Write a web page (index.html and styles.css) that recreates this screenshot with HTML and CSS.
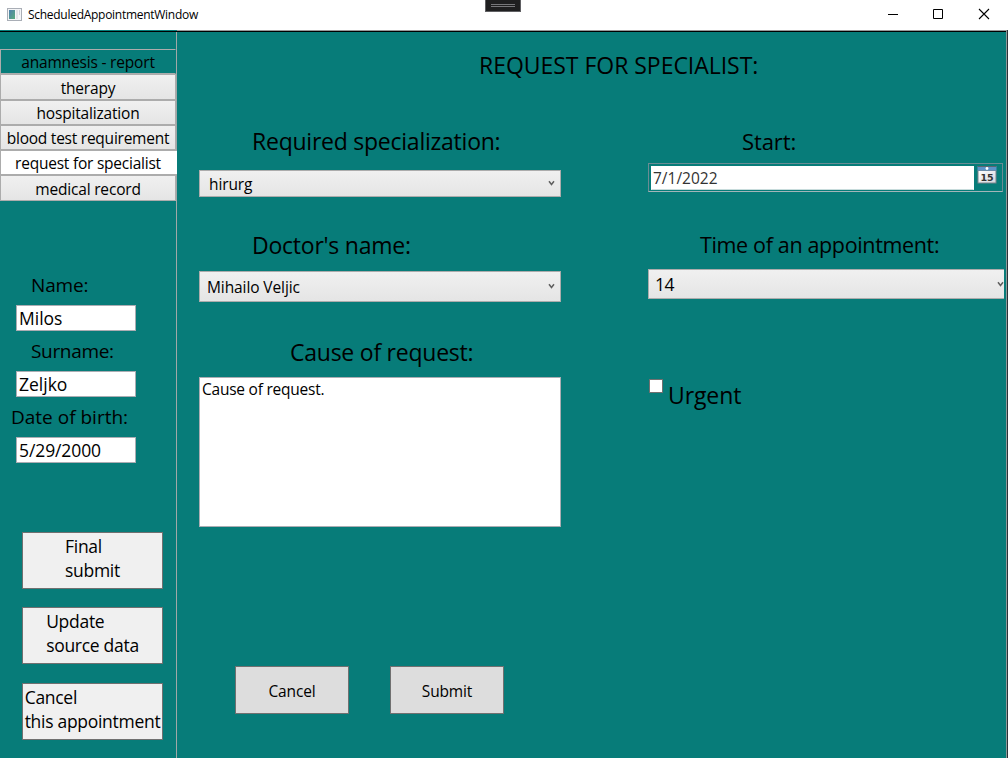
FILE: index.html
```html
<!DOCTYPE html>
<html lang="en">
<head>
<meta charset="utf-8">
<title>ScheduledAppointmentWindow</title>
<link rel="stylesheet" href="styles.css">
</head>
<body>
<div class="window">
  <header class="titlebar">
    <svg class="app-icon" width="15" height="13" viewBox="0 0 15 13">
      <defs><linearGradient id="pane" x1="0" y1="0" x2="1" y2="1"><stop offset="0" stop-color="#4e7fae"/><stop offset="1" stop-color="#58ac7c"/></linearGradient></defs>
      <rect x=".5" y=".5" width="14" height="12" fill="#f4f5f7" stroke="#a9aeb6"/>
      <rect x="2" y="2" width="6" height="9" fill="url(#pane)"/>
      <rect x="9" y="2" width="2" height="9" fill="#e2e4e8"/>
      <rect x="12" y="2" width="1" height="5" fill="#cfd3da"/>
    </svg>
    <span class="window-title">ScheduledAppointmentWindow</span>
    <div class="grip"><i></i><i></i></div>
    <svg class="controls" width="104" height="12" viewBox="0 0 104 12" fill="none" stroke="#000">
      <path d="M0 6.500h10M45.500 1.500h9v9h-9z"/>
      <path d="M91 1l10 10M101 1l-10 10" stroke-width="1.100"/>
    </svg>
  </header>
  <div class="body">
    <aside class="sidebar">
      <nav class="tabs">
        <div class="tab plain"><span>anamnesis - report</span></div>
        <div class="tab tall"><span>therapy</span></div>
        <div class="tab"><span>hospitalization</span></div>
        <div class="tab wide-text"><span>blood test requirement</span></div>
        <div class="tab active"><span>request for specialist</span></div>
        <div class="tab tall"><span>medical record</span></div>
      </nav>
      <section class="patient">
        <div class="patient-label">Name:</div>
        <div class="box">Milos</div>
        <div class="patient-label surname">Surname:</div>
        <div class="box">Zeljko</div>
        <div class="patient-label birth">Date of birth:</div>
        <div class="box dob">5/29/2000</div>
      </section>
      <section class="actions">
        <div class="action"><p>Final<br>submit</p></div>
        <div class="action"><p>Update<br>source data</p></div>
        <div class="action last"><p>Cancel<br>this appointment</p></div>
      </section>
    </aside>
    <main class="main">
      <h1 class="heading">REQUEST FOR SPECIALIST:</h1>
      <div class="columns">
        <div class="left">
          <label class="label spec">Required specialization:</label>
          <div class="combo hirurg"><span>hirurg</span><svg width="7" height="6" viewBox="0 0 7 6"><path d="M1 1.200l2.500 3.300L6 1.200" fill="none" stroke="#606060" stroke-width="1.500"/></svg></div>
          <label class="label doctor">Doctor's name:</label>
          <div class="combo mihailo"><span>Mihailo Veljic</span><svg width="7" height="6" viewBox="0 0 7 6"><path d="M1 1.200l2.500 3.300L6 1.200" fill="none" stroke="#606060" stroke-width="1.500"/></svg></div>
          <label class="label cause">Cause of request:</label>
          <div class="textarea">Cause of request.</div>
          <div class="buttons">
            <div class="button">Cancel</div>
            <div class="button">Submit</div>
          </div>
        </div>
        <div class="right">
          <label class="label start">Start:</label>
          <div class="datepicker">
            <div class="date">7/1/2022</div>
            <svg width="20" height="18" viewBox="0 0 20 18">
              <defs><linearGradient id="page" x1="0" y1="0" x2="1" y2="1"><stop offset="0" stop-color="#fff"/><stop offset="1" stop-color="#d4d6dc"/></linearGradient></defs>
              <rect x="1" y="4.500" width="18" height="12.500" fill="url(#page)" stroke="#7a828c"/>
              <rect x=".5" y="0" width="19" height="4.500" fill="#5b93c8"/>
              <path d="M.5 .5h19" stroke="#5d6670"/>
              <circle cx="10" cy="2.500" r="1.400" fill="#fff"/>
              <text class="cal" x="10" y="14.500" text-anchor="middle">15</text>
            </svg>
          </div>
          <label class="label time">Time of an appointment:</label>
          <div class="combo hour"><span>14</span><svg width="7" height="6" viewBox="0 0 7 6"><path d="M1 1.200l2.500 3.300L6 1.200" fill="none" stroke="#606060" stroke-width="1.500"/></svg></div>
          <div class="urgent"><i class="check"></i><span>Urgent</span></div>
        </div>
      </div>
    </main>
  </div>
</div>
</body>
</html>
```

FILE: styles.css
```css
* { box-sizing: border-box; }
body { margin: 0; font-family: "Open Sans", "Noto Sans", sans-serif; color: #000; }
span, p, label { white-space: nowrap; }
svg { display: block; flex: none; }
.window { width: 1008px; height: 758px; background: #077c79; overflow: hidden; }

.titlebar { position: relative; height: 30px; background: #fff; display: flex; align-items: center; padding: 0 16px 2px 7px; }
.window-title { margin-left: 6px; font-size: 12px; letter-spacing: -.28px; }
.controls { margin-left: auto; width: 104px; }
.grip { position: absolute; left: 485px; top: 0; width: 36px; height: 12px; background: #1f1f20; border: 1px solid #606063; border-top: 0; display: flex; flex-direction: column; gap: 1px; padding: 4px 5px 0; }
.grip i { height: 1px; background: #77777a; }

.body { display: flex; height: 728px; border-right: 1px solid #2c3338; }
.sidebar { width: 177px; flex: none; border-right: 1px solid #a0a8a8; }
.sidebar::before { content: ""; display: block; height: 1px; width: 177px; background: #077c79; border-bottom: 1px solid #000; }
.tabs { margin-top: 17px; }
.tab { width: 176px; height: 25px; border: 1px solid #acacac; background: linear-gradient(#f0f0f0, #e5e5e5); display: flex; align-items: center; justify-content: center; font-size: 15.500px; line-height: 20px; letter-spacing: -.18px; }
.tab.wide-text { letter-spacing: -.24px; }
.tab.tall { height: 26px; padding-top: 2px; }
.tab.plain { background: none; border-right-color: transparent; }
.tab.active { background: #fff; width: 177px; padding-right: 2px; border-right: 0; letter-spacing: -.23px; }

.patient { margin-top: 69px; }
.patient-label { height: 35px; padding-left: 31px; font-size: 19px; line-height: 31px; letter-spacing: -.15px; }
.patient-label.surname { letter-spacing: -.33px; }
.patient-label.birth { padding-left: 11px; letter-spacing: 0; }
.box { width: 120px; height: 26px; margin: 0 0 5px 16px; padding-left: 2px; border: 1px solid #abadb3; background: #fff; font-size: 17.500px; line-height: 25px; }
.box.dob { letter-spacing: -.1px; }

.actions { margin: 69px 0 0 22px; }
.action { width: 141px; height: 57px; margin-bottom: 18px; border: 1px solid #707070; background: #f0f0f0; display: flex; justify-content: center; }
.action.last { margin-top: 19px; }
.action p { margin: 1px 0 0; font-size: 17.500px; line-height: 24px; letter-spacing: -.29px; }

.main { flex: 1; border-top: 1px solid #999; border-right: 1px solid #8f9999; box-shadow: inset 0 1px #000; }
.heading { margin: 16px 0 0 302px; font-size: 23px; line-height: 36px; font-weight: normal; letter-spacing: -.03px; }
.columns { display: flex; }
.left { width: 362px; margin-left: 22px; }
.right { width: 356px; margin-left: 87px; }
.label { display: block; font-size: 23px; line-height: 34px; letter-spacing: -.24px; }
.spec { margin: 41px 0 12px 53px; }
.doctor { margin: 31px 0 9px 53px; }
.cause { margin: 33px 0 8px 91px; }
.start { margin: 41px 0 5px 94px; font-size: 22px; letter-spacing: -.1px; }
.time { margin: 36px 0 7px 52px; font-size: 21.500px; letter-spacing: -.35px; }
.combo { display: flex; align-items: center; justify-content: space-between; border: 1px solid #acacac; background: linear-gradient(#f0f0f0, #e5e5e5); padding: 0 5px 0 9px; font-size: 15.500px; letter-spacing: -.1px; }
.combo svg { margin-bottom: 1px; }
.hirurg { height: 27px; }
.mihailo { height: 31px; padding-left: 7px; }
.hour { height: 30px; padding: 0 0 0 6px; border-right: 0; font-size: 17.500px; letter-spacing: -.6px; }
.textarea { height: 150px; border: 1px solid #abadb3; background: #fff; padding-left: 2px; font-size: 15.500px; line-height: 23px; letter-spacing: -.23px; }
.buttons { display: flex; gap: 41px; margin: 139px 0 0 36px; }
.button { width: 114px; height: 48px; padding-top: 2px; border: 1px solid #707070; background: #ddd; display: flex; align-items: center; justify-content: center; font-size: 15.500px; letter-spacing: -.15px; }

.datepicker { display: flex; width: 355px; height: 29px; border: 1px solid #6a8c94; border-bottom-color: #a3b5b8; padding: 2px; gap: 3px; }
.date { width: 323px; height: 24px; border: 1px solid #fff; border-bottom-color: #c8dcdc; background: #fff; padding-left: 1px; font-size: 15.500px; line-height: 23px; color: #333; }
.cal { font: bold 9.500px "DejaVu Sans", sans-serif; fill: #333; }
.urgent { display: flex; margin: 80px 0 0 1px; font-size: 23px; line-height: 32px; letter-spacing: -.1px; }
.check { width: 14px; height: 14px; margin-right: 5px; border: 1px solid #707070; background: #fff; }
```
